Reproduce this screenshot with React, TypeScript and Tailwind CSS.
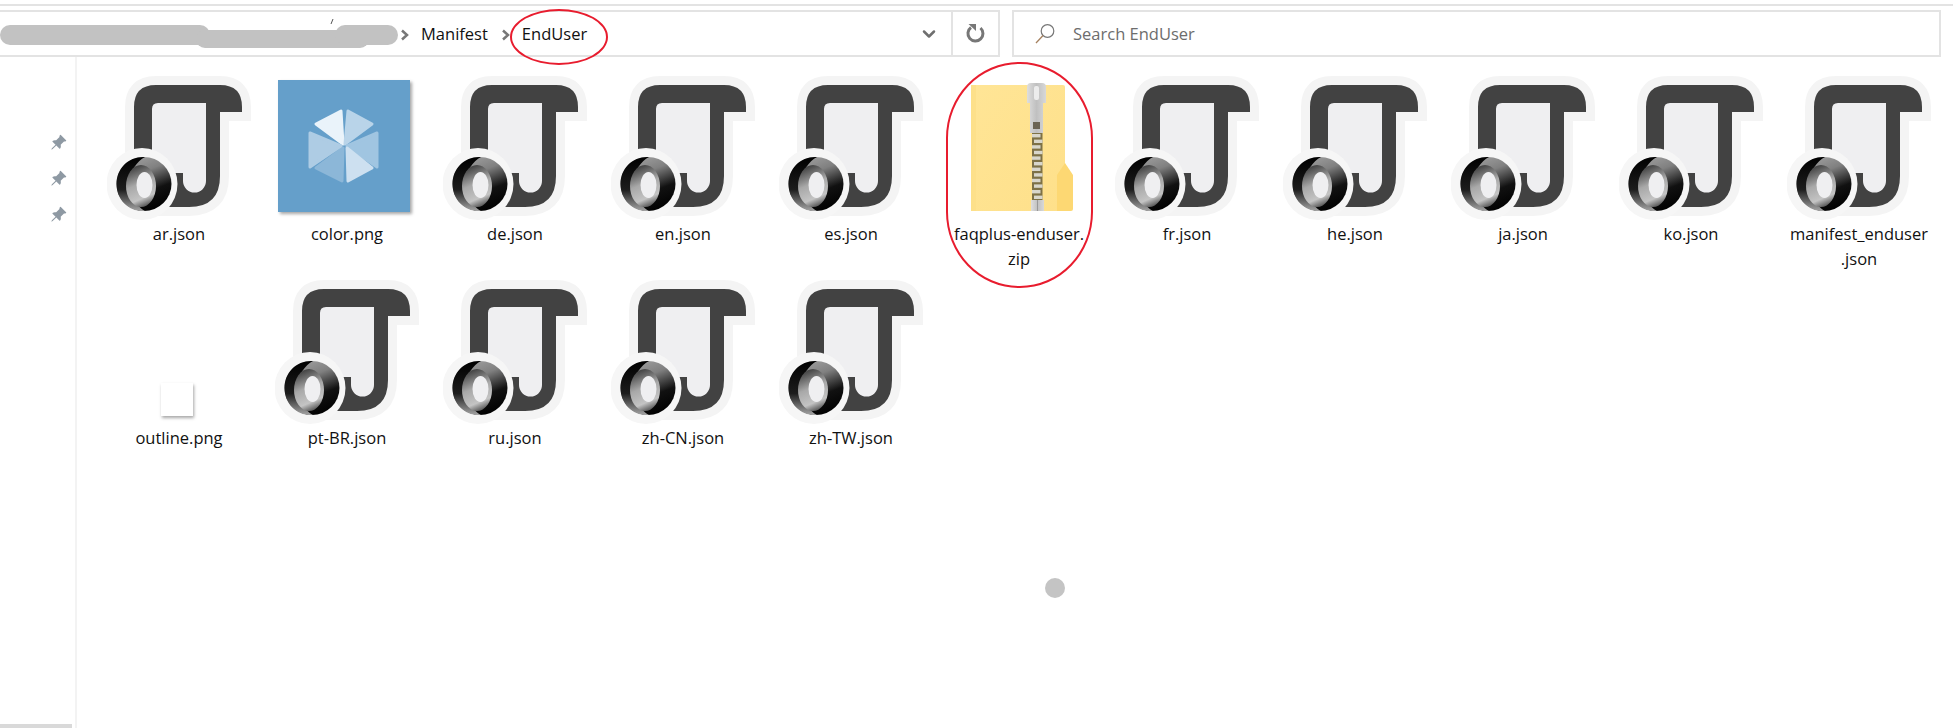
import { FC } from "react";
import { ChevronDown } from "lucide-react";
import { BsPinAngleFill } from "react-icons/bs";

const FONT = "font-['Open_Sans','Noto_Sans',sans-serif]";

const JsonIcon: FC = () => {
  const body =
    "M27 90V31Q27 9 49 9H113Q135 9 135 31V36H113V100Q113 131 82 131H55V90Z";
  return (
    <svg width="144" height="144" viewBox="0 0 144 144">
      <defs>
        <linearGradient id="ringL" x1="0.4" y1="0" x2="0.4" y2="1">
          <stop offset="0" stopColor="#000" />
          <stop offset="0.6" stopColor="#1c1c1c" />
          <stop offset="1" stopColor="#a5a5a5" />
        </linearGradient>
        <linearGradient id="ringR" x1="0.3" y1="0" x2="0.7" y2="1">
          <stop offset="0" stopColor="#a0a0a0" />
          <stop offset="0.3" stopColor="#808080" />
          <stop offset="0.65" stopColor="#111" />
          <stop offset="1" stopColor="#000" />
        </linearGradient>
        <linearGradient id="ringIn" x1="0.3" y1="0" x2="0.6" y2="1">
          <stop offset="0" stopColor="#3a3a3a" />
          <stop offset="0.45" stopColor="#a8a8a8" />
          <stop offset="0.8" stopColor="#c4c4c4" />
          <stop offset="1" stopColor="#555" />
        </linearGradient>
      </defs>
      {/* halo */}
      <path d={body} fill="#f4f4f4" stroke="#f4f4f4" strokeWidth="18" strokeLinejoin="miter" />
      {/* scroll */}
      <path d={body} fill="#424242" />
      <path d="M45 90V33Q45 27 51 27H99V105A11.5 11.5 0 0 1 76 105V97H45Z" fill="#efeff1" />
      {/* ring */}
      <ellipse cx="35" cy="108" rx="35.5" ry="36" fill="#f6f6f6" />
      <ellipse cx="37" cy="108" rx="27.5" ry="27" fill="url(#ringR)" />
      <path d="M38 81C22 80 9.5 92 9.5 108C9.5 124 22 136 38 135C32 132 22 120 22 108C22 96 30 85 38 81Z" fill="url(#ringL)" />
      <ellipse cx="34" cy="110" rx="15" ry="21" fill="url(#ringIn)" />
      <ellipse cx="37.5" cy="109" rx="8" ry="13" fill="#efeff1" />
    </svg>
  );
};

const ColorTile: FC = () => (
  <div className="mb-1 -ml-[6px] size-[132px] bg-[#659fca] shadow-[2px_2px_3px_rgba(0,0,0,0.35)]">
    <svg width="132" height="132" viewBox="0 0 132 132" strokeLinejoin="round" strokeWidth="3">
      <path d="M63 31L65 64L38 44Z" fill="#eaf3fa" stroke="#eaf3fa" />
      <path d="M70 31L94 44L67 64Z" fill="#b9d4e9" stroke="#b9d4e9" />
      <path d="M99 53V87L69 66Z" fill="#a0c5e1" stroke="#a0c5e1" />
      <path d="M69 68L94 88L70 101Z" fill="#cde0f0" stroke="#cde0f0" />
      <path d="M65 68L64 101L38 88Z" fill="#8cb7d8" stroke="#8cb7d8" />
      <path d="M32 53V87L63 66Z" fill="#aecce4" stroke="#aecce4" />
    </svg>
  </div>
);

const ZipIcon: FC = () => {
  const teeth = Array.from({ length: 12 }, (_, i) => i);
  return (
    <svg width="104" height="130" viewBox="0 0 104 130" className="mt-[7px] mb-[7px] ml-[8px]">
      <defs>
        <linearGradient id="folder" x1="0" y1="0" x2="1" y2="1">
          <stop offset="0" stopColor="#ffe596" />
          <stop offset="1" stopColor="#fee08a" />
        </linearGradient>
        <linearGradient id="metal" x1="0" y1="0" x2="1" y2="0">
          <stop offset="0" stopColor="#dedede" />
          <stop offset="0.5" stopColor="#c0c0c0" />
          <stop offset="1" stopColor="#d8d8d8" />
        </linearGradient>
      </defs>
      <path d="M0 2H92Q94 2 94 4V128H0Z" fill="url(#folder)" />
      <path d="M0 2H5V128H0Z" fill="#fde08a" />
      <path d="M86 92L94 80L102 92V126Q102 128 100 128H86Z" fill="#fdd873" />
      <rect x="61" y="50" width="10.5" height="68" fill="#7d7146" />
      {teeth.map((i) => (
        <rect
          key={i}
          x={i % 2 === 0 ? 61 : 63}
          y={51 + i * 5.6}
          width="8.5"
          height="3.4"
          fill="#d8d6cb"
        />
      ))}
      <path d="M56 4Q56 0 60 0H71Q75 0 75 4V20H72V50H59V20H56Z" fill="url(#metal)" />
      <rect x="63" y="3" width="5" height="14" rx="2" fill="#ececec" />
      <rect x="62" y="39" width="7" height="7" fill="#6b6454" />
      <rect x="60" y="117" width="13" height="11" fill="url(#metal)" />
      <rect x="66" y="117" width="1" height="11" fill="#999" />
    </svg>
  );
};

const OutlineTile: FC = () => (
  <div className="mt-[103px] mb-2 -ml-[5px] h-[33px] w-[32px] bg-white shadow-[1px_2px_3px_rgba(0,0,0,0.35)]" />
);

const Cell: FC<{ name: string; icon?: "json" | "color" | "zip" | "outline" }> = ({ name, icon = "json" }) => (
  <div className="flex flex-col items-center">
    <div className="flex h-[144px] items-start justify-center">
      {icon === "json" && <JsonIcon />}
      {icon === "color" && <div className="mt-1"><ColorTile /></div>}
      {icon === "zip" && <ZipIcon />}
      {icon === "outline" && <OutlineTile />}
    </div>
    <p className="mt-[1px] whitespace-pre-line text-center text-[16.5px] leading-[25px] text-[#111]">{name}</p>
  </div>
);

const App: FC = () => {
  return (
    <div className={`relative h-[728px] w-[1953px] overflow-hidden bg-white ${FONT}`}>
      {/* toolbar */}
      <div className="h-[6px] border-b-2 border-[#e3e3e3]" />
      <div className="mt-[4px] flex h-[47px] pr-3">
        <div className="flex w-[1000px] items-center border-2 border-l-0 border-[#e3e3e3]">
          <svg width="400" height="34" viewBox="0 0 400 34" className="mt-[3px] shrink-0">
            <path d="M10 17H200" stroke="#c2c2c2" strokeWidth="20" strokeLinecap="round" fill="none" />
            <path d="M205 21H360" stroke="#c2c2c2" strokeWidth="18" strokeLinecap="round" fill="none" />
            <path d="M345 17H388" stroke="#c2c2c2" strokeWidth="20" strokeLinecap="round" fill="none" />
            <path d="M331 6L333 1" stroke="#555" strokeWidth="1" />
          </svg>
          <svg width="10" height="12" viewBox="0 0 10 12" className="mt-[2px]">
            <path d="M2 1.5L7 6L2 10.5" stroke="#777" strokeWidth="2.5" fill="none" />
          </svg>
          <span className="ml-[11px] mt-[2px] text-[16.5px] text-[#111]">Manifest</span>
          <svg width="10" height="12" viewBox="0 0 10 12" className="ml-[13px] mt-[2px]">
            <path d="M2 1.5L7 6L2 10.5" stroke="#777" strokeWidth="2.5" fill="none" />
          </svg>
          <span className="ml-[11px] mt-[2px] text-[16.5px] text-[#111]">EndUser</span>
          <ChevronDown size={20} strokeWidth={3} className="ml-auto mr-[12px] text-[#6f6f6f]" />
          <div className="flex h-full w-[47px] items-center justify-center border-l-2 border-[#e3e3e3]">
            <svg width="20" height="22" viewBox="0 0 20 22">
              <path d="M5 4.5A7.5 7.5 0 1 0 14.5 5" stroke="#777" strokeWidth="3" fill="none" />
              <path d="M2.5 1H10V8Z" fill="#777" />
            </svg>
          </div>
        </div>
        <div className="ml-[12px] flex flex-1 items-center border-2 border-[#e3e3e3] pl-[20px]">
          <svg width="22" height="22" viewBox="0 0 22 22" fill="none">
            <circle cx="13.5" cy="8" r="6.3" stroke="#777" strokeWidth="1.2" />
            <path d="M9 12.5L2 20" stroke="#a5815f" strokeWidth="1.3" />
          </svg>
          <span className="ml-[17px] mt-[2px] text-[16.5px] text-[#6d6d6d]">Search EndUser</span>
        </div>
      </div>

      <div className="flex">
        {/* quick access rail */}
        <aside className="relative h-[671px] w-[77px] shrink-0 border-r-2 border-[#f3f3f3]">
          <div className="flex flex-col items-end gap-[19px] pr-[8px] pt-[77px] text-[#8e99a3]">
            <BsPinAngleFill size={17} />
            <BsPinAngleFill size={17} />
            <BsPinAngleFill size={17} />
          </div>
          <div className="absolute bottom-0 left-0 h-1 w-[72px] bg-[#d9d9d9]" />
        </aside>

        {/* files */}
        <div className="grid grid-cols-[repeat(11,168px)] auto-rows-[204px] pl-[18px] pt-[19px]">
          <Cell name="ar.json" />
          <Cell name="color.png" icon="color" />
          <Cell name="de.json" />
          <Cell name="en.json" />
          <Cell name="es.json" />
          <Cell name={"faqplus-enduser.\nzip"} icon="zip" />
          <Cell name="fr.json" />
          <Cell name="he.json" />
          <Cell name="ja.json" />
          <Cell name="ko.json" />
          <Cell name={"manifest_enduser\n.json"} />
          <Cell name="outline.png" icon="outline" />
          <Cell name="pt-BR.json" />
          <Cell name="ru.json" />
          <Cell name="zh-CN.json" />
          <Cell name="zh-TW.json" />
        </div>
      </div>

      {/* red annotations and pointer dot */}
      <div className="absolute left-[510px] top-[9px] h-[56px] w-[98px] rounded-[50%] border-2 border-[#e81c2e]" />
      <div className="absolute left-[946px] top-[62px] h-[226px] w-[147px] rounded-[73px/76px] border-2 border-[#e81c2e]" />
      <div className="absolute left-[1045px] top-[578px] size-5 rounded-full bg-[#c4c4c4]" />
    </div>
  );
};

export default App;
